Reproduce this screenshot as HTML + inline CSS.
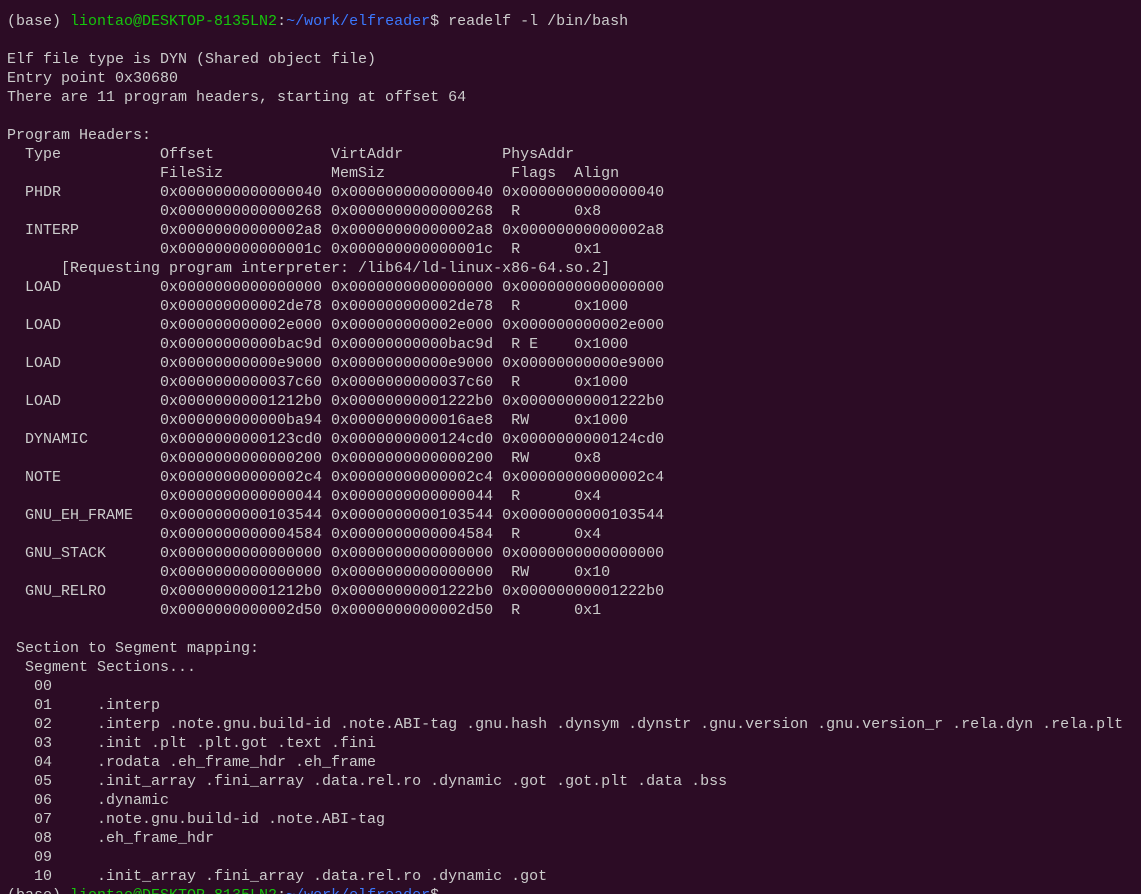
<!DOCTYPE html>
<html><head><meta charset="utf-8"><style>
html,body{margin:0;padding:0;background:#2c0c25;width:1141px;height:894px;overflow:hidden}
pre{margin:0;padding:12px 0 0 7px;font-family:"Liberation Mono",monospace;font-size:15px;line-height:19px;color:#cccccc;white-space:pre}
.g{color:#16c60c}.b{color:#3b78ff}
</style></head><body><pre>(base) <span class="g">liontao@DESKTOP-8135LN2</span>:<span class="b">~/work/elfreader</span>$ readelf -l /bin/bash

Elf file type is DYN (Shared object file)
Entry point 0x30680
There are 11 program headers, starting at offset 64

Program Headers:
  Type           Offset             VirtAddr           PhysAddr
                 FileSiz            MemSiz              Flags  Align
  PHDR           0x0000000000000040 0x0000000000000040 0x0000000000000040
                 0x0000000000000268 0x0000000000000268  R      0x8
  INTERP         0x00000000000002a8 0x00000000000002a8 0x00000000000002a8
                 0x000000000000001c 0x000000000000001c  R      0x1
      [Requesting program interpreter: /lib64/ld-linux-x86-64.so.2]
  LOAD           0x0000000000000000 0x0000000000000000 0x0000000000000000
                 0x000000000002de78 0x000000000002de78  R      0x1000
  LOAD           0x000000000002e000 0x000000000002e000 0x000000000002e000
                 0x00000000000bac9d 0x00000000000bac9d  R E    0x1000
  LOAD           0x00000000000e9000 0x00000000000e9000 0x00000000000e9000
                 0x0000000000037c60 0x0000000000037c60  R      0x1000
  LOAD           0x00000000001212b0 0x00000000001222b0 0x00000000001222b0
                 0x000000000000ba94 0x0000000000016ae8  RW     0x1000
  DYNAMIC        0x0000000000123cd0 0x0000000000124cd0 0x0000000000124cd0
                 0x0000000000000200 0x0000000000000200  RW     0x8
  NOTE           0x00000000000002c4 0x00000000000002c4 0x00000000000002c4
                 0x0000000000000044 0x0000000000000044  R      0x4
  GNU_EH_FRAME   0x0000000000103544 0x0000000000103544 0x0000000000103544
                 0x0000000000004584 0x0000000000004584  R      0x4
  GNU_STACK      0x0000000000000000 0x0000000000000000 0x0000000000000000
                 0x0000000000000000 0x0000000000000000  RW     0x10
  GNU_RELRO      0x00000000001212b0 0x00000000001222b0 0x00000000001222b0
                 0x0000000000002d50 0x0000000000002d50  R      0x1

 Section to Segment mapping:
  Segment Sections...
   00
   01     .interp
   02     .interp .note.gnu.build-id .note.ABI-tag .gnu.hash .dynsym .dynstr .gnu.version .gnu.version_r .rela.dyn .rela.plt
   03     .init .plt .plt.got .text .fini
   04     .rodata .eh_frame_hdr .eh_frame
   05     .init_array .fini_array .data.rel.ro .dynamic .got .got.plt .data .bss
   06     .dynamic
   07     .note.gnu.build-id .note.ABI-tag
   08     .eh_frame_hdr
   09
   10     .init_array .fini_array .data.rel.ro .dynamic .got
(base) <span class="g">liontao@DESKTOP-8135LN2</span>:<span class="b">~/work/elfreader</span>$</pre></body></html>
